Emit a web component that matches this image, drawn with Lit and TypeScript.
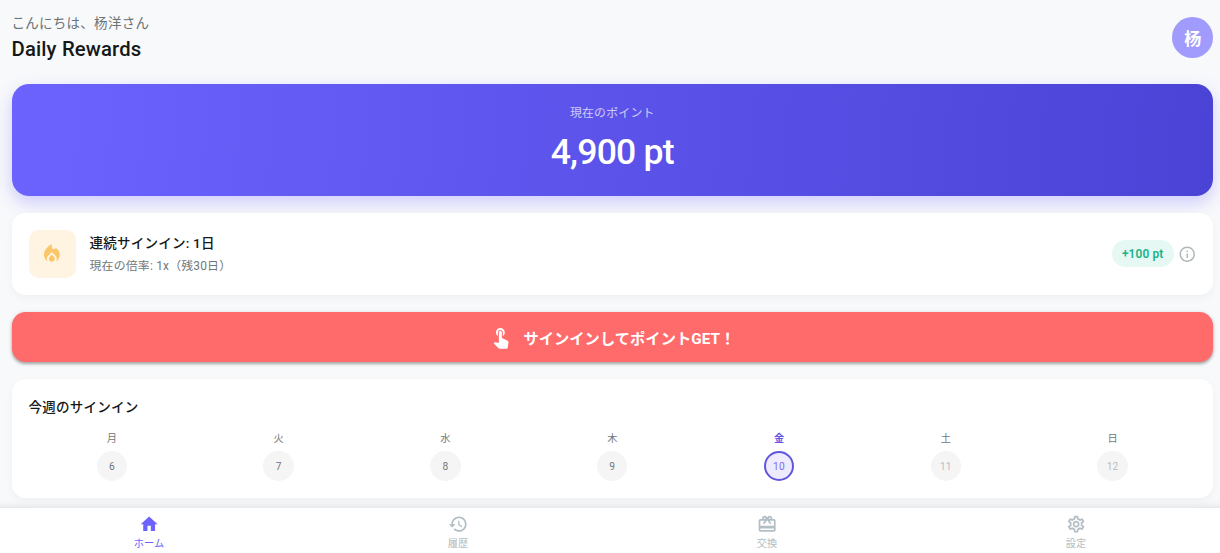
import { LitElement, css, html, svg } from 'lit';
import { customElement, property, state } from 'lit/decorators.js';
import { classMap } from 'lit/directives/class-map.js';

// 24x24 material icon paths
const ICONS = {
    home: svg`<path d="M10 20v-6h4v6h5v-8h3L12 3 2 12h3v8z"/>`,
    history: svg`<path d="M13 3c-4.97 0-9 4.03-9 9H1l3.89 3.89.07.14L9 12H6c0-3.87 3.13-7 7-7s7 3.13 7 7-3.13 7-7 7c-1.93 0-3.68-.79-4.94-2.06l-1.42 1.42C8.27 19.99 10.51 21 13 21c4.97 0 9-4.03 9-9s-4.03-9-9-9zm-1 5v5l4.28 2.54.72-1.21-3.5-2.08V8H12z"/>`,
    redeem: svg`<path d="M20 6h-2.18c.11-.31.18-.65.18-1 0-1.66-1.34-3-3-3-1.05 0-1.96.54-2.5 1.35l-.5.67-.5-.68C10.96 2.54 10.05 2 9 2 7.34 2 6 3.34 6 5c0 .35.07.69.18 1H4c-1.11 0-1.99.89-1.99 2L2 19c0 1.11.89 2 2 2h16c1.11 0 2-.89 2-2V8c0-1.11-.89-2-2-2zm-5-2c.55 0 1 .45 1 1s-.45 1-1 1-1-.45-1-1 .45-1 1-1zM9 4c.55 0 1 .45 1 1s-.45 1-1 1-1-.45-1-1 .45-1 1-1zm11 15H4v-2h16v2zm0-5H4V8h5.08L7 10.83 8.62 12 11 8.76l1-1.36 1 1.36L15.38 12 17 10.83 14.92 8H20v6z"/>`,
    settings: svg`<path d="M19.43 12.98c.04-.32.07-.64.07-.98 0-.34-.03-.66-.07-.98l2.11-1.65c.19-.15.24-.42.12-.64l-2-3.46c-.09-.16-.26-.25-.44-.25-.06 0-.12.01-.17.03l-2.49 1c-.52-.4-1.08-.73-1.69-.98l-.38-2.65C14.46 2.18 14.25 2 14 2h-4c-.25 0-.46.18-.49.42l-.38 2.65c-.61.25-1.17.59-1.69.98l-2.49-1c-.06-.02-.12-.03-.18-.03-.17 0-.34.09-.43.25l-2 3.46c-.13.22-.07.49.12.64l2.11 1.65c-.04.32-.07.65-.07.98 0 .33.03.66.07.98l-2.11 1.65c-.19.15-.24.42-.12.64l2 3.46c.09.16.26.25.44.25.06 0 .12-.01.17-.03l2.49-1c.52.4 1.08.73 1.69.98l.38 2.65c.03.24.24.42.49.42h4c.25 0 .46-.18.49-.42l.38-2.65c.61-.25 1.17-.59 1.69-.98l2.49 1c.06.02.12.03.18.03.17 0 .34-.09.43-.25l2-3.46c.12-.22.07-.49-.12-.64l-2.11-1.65zm-1.98-1.71c.04.31.05.52.05.73 0 .21-.02.43-.05.73l-.14 1.13.89.7 1.08.84-.7 1.21-1.27-.51-1.04-.42-.9.68c-.43.32-.84.56-1.25.73l-1.06.43-.16 1.13-.2 1.35h-1.4l-.19-1.35-.16-1.13-1.06-.43c-.43-.18-.83-.41-1.23-.71l-.91-.7-1.06.43-1.27.51-.7-1.21 1.08-.84.89-.7-.14-1.13c-.03-.31-.05-.54-.05-.74s.02-.43.05-.73l.14-1.13-.89-.7-1.08-.84.7-1.21 1.27.51 1.04.42.9-.68c.43-.32.84-.56 1.25-.73l1.06-.43.16-1.13.2-1.35h1.39l.19 1.35.16 1.13 1.06.43c.43.18.83.41 1.23.71l.91.7 1.06-.43 1.27-.51.7 1.21-1.07.85-.89.7.14 1.13zM12 8c-2.21 0-4 1.79-4 4s1.79 4 4 4 4-1.79 4-4-1.79-4-4-4zm0 6c-1.1 0-2-.9-2-2s.9-2 2-2 2 .9 2 2-.9 2-2 2z"/>`,
    info: svg`<path d="M11 7h2v2h-2zm0 4h2v6h-2zm1-9C6.48 2 2 6.48 2 12s4.48 10 10 10 10-4.48 10-10S17.52 2 12 2zm0 18c-4.41 0-8-3.59-8-8s3.59-8 8-8 8 3.59 8 8-3.59 8-8 8z"/>`,
    touch: svg`<path d="M9 11.24V7.5C9 6.12 10.12 5 11.5 5S14 6.12 14 7.5v3.74c1.21-.81 2-2.18 2-3.74C16 5.01 13.99 3 11.5 3S7 5.01 7 7.5c0 1.56.79 2.93 2 3.74zm9.84 4.63l-4.54-2.26c-.17-.07-.35-.11-.54-.11H13v-6c0-.83-.67-1.5-1.5-1.5S10 6.67 10 7.5v10.74l-3.43-.72c-.08-.01-.15-.03-.24-.03-.31 0-.59.13-.79.33l-.79.8 4.94 4.94c.27.27.65.44 1.06.44h6.79c.75 0 1.33-.55 1.44-1.28l.75-5.27c.01-.07.02-.14.02-.2 0-.62-.38-1.16-.91-1.38z"/>`,
    fire: svg`<path d="M16 6l-.44.55C14.38 8.02 12 7.19 12 5.3V2S4 6 4 13c0 2.92 1.56 5.47 3.89 6.86-.56-.79-.89-1.76-.89-2.8 0-1.32.52-2.56 1.47-3.5L12 10.1l3.53 3.47c.95.93 1.47 2.17 1.47 3.5 0 1.02-.31 1.96-.85 2.75 1.89-1.15 3.29-3.06 3.71-5.3.66-3.55-1.07-6.9-3.86-8.52z"/><path d="M12 12.9l-2.13 2.09c-.56.56-.87 1.29-.87 2.07C9 18.68 10.35 20 12 20s3-1.32 3-2.94c0-.78-.31-1.52-.87-2.07L12 12.9z"/>`,
};

type IconName = keyof typeof ICONS;

interface Day {
    label: string;
    date: number;
    today?: boolean;
    future?: boolean;
}

@customElement('app-icon')
export class AppIcon extends LitElement {
    @property() name: IconName = 'home';

    static styles = css`
    :host {
        display: block;
        flex: none;
        width: 20.3px;
        height: 20.3px;
    }

    .icon {
        display: block;
        width: 100%;
        height: 100%;
        fill: currentColor;
    }
    `;

    render() {
        return html`<svg class="icon" viewBox="0 0 24 24">${ICONS[this.name]}</svg>`;
    }
}

@customElement('week-day')
export class WeekDay extends LitElement {
    @property({ attribute: false }) day!: Day;

    static styles = css`
    :host {
        display: flex;
        flex-direction: column;
        align-items: center;
    }

    .label {
        font-size: 10.2px;
        line-height: 15px;
        color: #6f7779;
    }

    .date {
        display: flex;
        align-items: center;
        justify-content: center;
        box-sizing: border-box;
        width: 30.5px;
        height: 30.5px;
        margin-top: 4.5px;
        padding-top: 1px;
        border-radius: 50%;
        background: #f5f5f5;
        color: #6f7779;
        font-size: 10.2px;
        letter-spacing: 0.2px;
    }

    .label.today {
        color: #6156e2;
        font-weight: 700;
    }

    .date.today {
        background: #edebfd;
        border: 2px solid #6156e0;
        color: #7a70ee;
    }

    .date.future {
        color: #bdbdbd;
    }
    `;

    render() {
        const state = { today: !!this.day.today, future: !!this.day.future };
        return html`
            <span class=${classMap({ label: true, ...state })}>${this.day.label}</span>
            <span class=${classMap({ date: true, ...state })}>${this.day.date}</span>
        `;
    }
}

@customElement('app-root')
export class AppRoot extends LitElement {
    @state() private tab = 'home';

    private days: Day[] = [
        { label: '月', date: 6 },
        { label: '火', date: 7 },
        { label: '水', date: 8 },
        { label: '木', date: 9 },
        { label: '金', date: 10, today: true },
        { label: '土', date: 11, future: true },
        { label: '日', date: 12, future: true },
    ];

    private tabs: { id: IconName; label: string }[] = [
        { id: 'home', label: 'ホーム' },
        { id: 'history', label: '履歴' },
        { id: 'redeem', label: '交換' },
        { id: 'settings', label: '設定' },
    ];

    static styles = css`
    :host {
        display: flex;
        flex-direction: column;
        height: 553px;
        overflow: hidden;
        background: #f8f9fb;
        color: #151819;
        font-family: Roboto, "Noto Sans CJK JP", sans-serif;
    }

    .content {
        flex: 1;
        display: flex;
        flex-direction: column;
        padding: 12px 7px 0 11.5px;
    }

    .header {
        display: flex;
        justify-content: space-between;
        align-items: center;
        height: 51px;
        margin-bottom: 20.5px;
    }

    .greeting {
        font-size: 13.5px;
        line-height: 20px;
        letter-spacing: 0.27px;
        color: #6b7375;
    }

    .title {
        margin: 3px 0 0;
        font-size: 20.3px;
        line-height: 27px;
        letter-spacing: 0.15px;
        font-weight: 500;
    }

    .avatar {
        display: flex;
        align-items: center;
        justify-content: center;
        width: 40.6px;
        height: 40.6px;
        border-radius: 50%;
        background: #a29bfe;
        color: #fff;
        font-size: 17px;
        font-weight: 700;
    }

    .points {
        display: flex;
        flex-direction: column;
        align-items: center;
        box-sizing: border-box;
        height: 112.5px;
        padding-top: 20.5px;
        border-radius: 17px;
        background: linear-gradient(95.3deg, #6c63ff, #4b42d6);
        box-shadow: 0 7px 17px rgba(108, 99, 255, 0.3);
        color: #fff;
    }

    .points-label {
        font-size: 11.9px;
        line-height: 18px;
        letter-spacing: 0.2px;
        opacity: 0.7;
    }

    .points-value {
        margin-top: 9px;
        font-size: 35.6px;
        line-height: 42px;
        letter-spacing: -0.8px;
        font-weight: 500;
    }

    .card {
        box-sizing: border-box;
        margin-top: 17px;
        padding: 17px;
        border-radius: 13.5px;
        background: #fff;
        box-shadow: 0 3px 8.5px rgba(0, 0, 0, 0.04);
    }

    .streak {
        display: flex;
        align-items: center;
        height: 81.5px;
    }

    .flame {
        display: flex;
        align-items: center;
        justify-content: center;
        width: 47.5px;
        height: 47.5px;
        margin-right: 13.5px;
        border-radius: 10px;
        background: #fff3e2;
        color: #fac668;
    }

    .fire,
    .touch {
        width: 23.7px;
        height: 23.7px;
    }

    .streak-text {
        flex: 1;
        padding-top: 1px;
    }

    .subtitle {
        margin: 0;
        font-size: 13.55px;
        line-height: 20px;
        letter-spacing: 0.2px;
        font-weight: 500;
    }

    .rate {
        margin-top: 4px;
        font-size: 11.9px;
        line-height: 18px;
        letter-spacing: 0.2px;
        color: #6f7779;
    }

    .badge {
        padding: 6px 10px 4px;
        border-radius: 17px;
        background: #e5f8f3;
        color: #1bb289;
        font-size: 11.9px;
        line-height: 17px;
        letter-spacing: 0.15px;
        font-weight: 600;
    }

    .info {
        width: 18.5px;
        height: 18.5px;
        margin-left: 4px;
        color: #b2b8ba;
    }

    .sign-in {
        display: flex;
        align-items: center;
        justify-content: center;
        gap: 10.5px;
        height: 50.5px;
        margin-top: 17px;
        padding: 0;
        border: 0;
        border-radius: 13.5px;
        background: #ff6b6b;
        box-shadow: 0 2px 3px rgba(0, 0, 0, 0.28), 0 1px 5px rgba(0, 0, 0, 0.12);
        color: #fff;
        font-family: inherit;
        font-size: 15.25px;
        letter-spacing: 0.05px;
        font-weight: 700;
    }

    .week {
        height: 119px;
        padding-top: 18px;
    }

    .days {
        display: grid;
        grid-template-columns: repeat(7, 1fr);
        margin-top: 14px;
    }

    .nav {
        display: grid;
        grid-template-columns: repeat(4, 1fr);
        flex: none;
        height: 45px;
        margin: 0 -10.5px 0 -5.5px;
        background: #fff;
        box-shadow: 0 -2px 7px rgba(0, 0, 0, 0.09);
        z-index: 1;
    }

    .tab {
        display: flex;
        flex-direction: column;
        align-items: center;
        padding: 6px 0 0;
        border: 0;
        background: none;
        color: #b2bec3;
        font-family: inherit;
        font-size: 10.2px;
        line-height: 15px;
    }

    .tab.active {
        color: #6c63ff;
    }

    .tab-label {
        margin-top: 1.5px;
    }
    `;

    render() {
        return html`
            <main class="content">
                <header class="header">
                    <div>
                        <div class="greeting">こんにちは、杨洋さん</div>
                        <h1 class="title">Daily Rewards</h1>
                    </div>
                    <div class="avatar">杨</div>
                </header>

                <section class="points">
                    <div class="points-label">現在のポイント</div>
                    <div class="points-value">4,900 pt</div>
                </section>

                <section class="card streak">
                    <div class="flame"><app-icon class="fire" name="fire"></app-icon></div>
                    <div class="streak-text">
                        <h2 class="subtitle">連続サインイン: 1日</h2>
                        <div class="rate">現在の倍率: 1x（残30日）</div>
                    </div>
                    <span class="badge">+100 pt</span>
                    <app-icon class="info" name="info"></app-icon>
                </section>

                <button class="sign-in">
                    <app-icon class="touch" name="touch"></app-icon>
                    <span>サインインしてポイントGET！</span>
                </button>

                <section class="card week">
                    <h2 class="subtitle">今週のサインイン</h2>
                    <div class="days">
                        ${this.days.map((day) => html`<week-day .day=${day}></week-day>`)}
                    </div>
                </section>
            </main>

            <nav class="nav">
                ${this.tabs.map(({ id, label }) => html`
                    <button class=${classMap({ tab: true, active: this.tab === id })} @click=${() => { this.tab = id; }}>
                        <app-icon name=${id}></app-icon>
                        <span class="tab-label">${label}</span>
                    </button>
                `)}
            </nav>
        `;
    }
}
